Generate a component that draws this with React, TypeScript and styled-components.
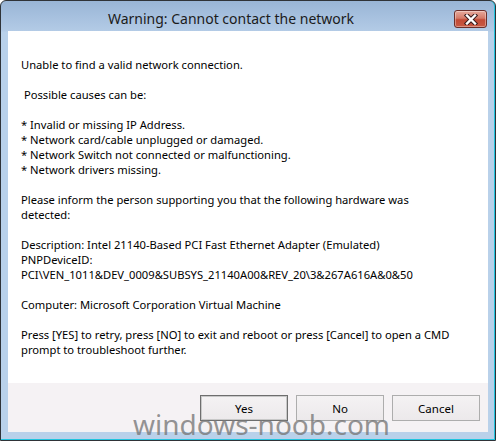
import styled, { createGlobalStyle } from 'styled-components'

const MESSAGE_LINES = [
  'Unable to find a valid network connection.',
  '',
  ' Possible causes can be:',
  '',
  '* Invalid or missing IP Address.',
  '* Network card/cable unplugged or damaged.',
  '* Network Switch not connected or malfunctioning.',
  '* Network drivers missing.',
  '',
  'Please inform the person supporting you that the following hardware was',
  'detected:',
  '',
  'Description: Intel 21140-Based PCI Fast Ethernet Adapter (Emulated)',
  'PNPDeviceID:',
  'PCI\\VEN_1011&DEV_0009&SUBSYS_21140A00&REV_20\\3&267A616A&0&50',
  '',
  'Computer: Microsoft Corporation Virtual Machine',
  '',
  'Press [YES] to retry, press [NO] to exit and reboot or press [Cancel] to open a CMD',
  'prompt to troubleshoot further.'
]

const BUTTONS = [
  { label: 'Yes', isDefault: true },
  { label: 'No', isDefault: false },
  { label: 'Cancel', isDefault: false }
]

export default function App() {
  return (
    <>
      <GlobalStyle />
      <Window>
        <TitleBar>
          <Title>Warning: Cannot contact the network</Title>
          <CloseButton aria-label="Close">
            <svg width="16" height="11" viewBox="0 0 16 11">
              <path d="M4 1.5 L12 9.5 M12 1.5 L4 9.5" stroke="#3b1d1d" strokeWidth="4.4" strokeLinecap="square" />
              <path d="M4 1.5 L12 9.5 M12 1.5 L4 9.5" stroke="#ffffff" strokeWidth="2.4" strokeLinecap="square" />
            </svg>
          </CloseButton>
        </TitleBar>

        <Client>
          <Message>{MESSAGE_LINES.join('\n')}</Message>

          <ButtonBar>
            {BUTTONS.map(button => (
              <DialogButton key={button.label} $isDefault={button.isDefault}>
                {button.label}
              </DialogButton>
            ))}
          </ButtonBar>
        </Client>

        {/* site watermark stamped over the bottom of the screenshot */}
        <Watermark>windows-noob.com</Watermark>
      </Window>
    </>
  )
}

const GlobalStyle = createGlobalStyle`
  html,
  body {
    margin: 0;
    padding: 0;
    background: #ffffff;
  }

  body {
    font-family: 'Noto Sans', 'Open Sans', sans-serif;
  }
`

const Window = styled.div`
  position: relative;
  box-sizing: border-box;
  display: flex;
  flex-direction: column;
  width: 496px;
  height: 441px;
  padding: 0 7px 8px 7px;
  border: 1px solid #2f3338;
  border-radius: 6px 6px 0 0;
  background: linear-gradient(#99b5d6 0px, #b3cbe6 30px, #b9d1ea 31px);
  box-shadow: inset 0 -1px 0 #22c4de, inset -1px 0 0 #22c4de;
  overflow: hidden;
`

const TitleBar = styled.div`
  display: flex;
  align-items: flex-start;
  height: 30px;
`

const Title = styled.div`
  flex: 1;
  padding-top: 8px;
  text-align: center;
  font-size: 14px;
  line-height: 20px;
  color: #1b1b1b;
`

const CloseButton = styled.div`
  box-sizing: border-box;
  display: flex;
  align-items: center;
  justify-content: center;
  width: 33px;
  height: 18px;
  margin-top: 9px;
  margin-right: 1px;
  border: 1px solid #6b2f2a;
  border-radius: 3px;
  background: linear-gradient(#e6aa9c 0%, #d47a68 45%, #c24a35 55%, #c85a44 100%);
  box-shadow: inset 0 0 0 1px rgba(255, 255, 255, 0.35);
`

const Client = styled.div`
  display: flex;
  flex-direction: column;
  flex: 1;
  background: #ffffff;
`

const Message = styled.div`
  flex: 1;
  padding: 26px 0 0 13px;
  white-space: pre;
  font-size: 11.2px;
  line-height: 15px;
  color: #000000;
`

const ButtonBar = styled.div`
  display: flex;
  justify-content: flex-end;
  gap: 8px;
  height: 49px;
  box-sizing: border-box;
  padding: 12px 8px 0 0;
  background: #f5f2f4;
`

const DialogButton = styled.div<{ $isDefault: boolean }>`
  box-sizing: border-box;
  display: flex;
  align-items: center;
  justify-content: center;
  width: 88px;
  height: 26px;
  border: 1px solid ${p => (p.$isDefault ? '#6e6e6e' : '#adadad')};
  background: linear-gradient(#f4f2f3, #ece9eb);
  box-shadow: ${p => (p.$isDefault ? 'inset 0 0 0 1px #c8c8c8' : 'none')};
  font-size: 11.5px;
  color: #000000;
`

const Watermark = styled.div`
  position: absolute;
  left: 132px;
  bottom: 2px;
  font-size: 28px;
  line-height: 28px;
  color: rgba(120, 120, 120, 0.8);
  pointer-events: none;
`
